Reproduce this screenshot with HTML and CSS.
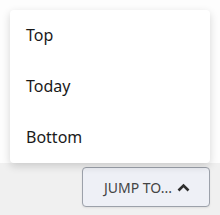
FILE: index.html
```html
<!DOCTYPE html>
<html lang="en">
<head>
    <meta charset="UTF-8">
    <title>Jump to</title>
    <link rel="stylesheet" href="styles.css">
</head>
<body>
  <div class="page">
    <ul class="jump-menu">
        <li>Top</li>
        <li>Today</li>
        <li>Bottom</li>
    </ul>
  </div>
  <div class="footer-bar">
    <button class="jump-btn">
        JUMP TO...
        <svg width="13" height="9" viewBox="0 0 13 9"><path d="M1.5 7.5 L6.5 2.5 L11.5 7.5" fill="none" stroke="#2e2e2e" stroke-width="2.6"/></svg>
    </button>
  </div>
</body>
</html>
```

FILE: styles.css
```css
body{
    margin: 0;
    width: 220px;
    height: 215px;
    font-family: "Noto Sans", "Open Sans", sans-serif;
    background-color: #fdfdfd;
    overflow: hidden;
}

.page{
    padding: 10px 10px 0 10px;
    position: relative;
    z-index: 1;
}

.jump-menu{
    list-style: none;
    margin: 0;
    padding: 0;
    background: #fff;
    border-radius: 4px;
    box-shadow: 0 3px 8px rgba(0,0,0,0.16);
}

.jump-menu li{
    height: 51px;
    line-height: 51px;
    padding-left: 16px;
    font-size: 16px;
    color: #1a1a1a;
}

.footer-bar{
    background-color: #f0f0f0;
    height: 52px;
    display: flex;
    justify-content: flex-end;
    align-items: flex-start;
    padding: 4px 10px 0 0;
    box-sizing: border-box;
}

.jump-btn{
    width: 128px;
    height: 40px;
    background-color: #eef0f6;
    border: 1px solid #9ca1aa;
    border-radius: 4px;
    font-family: "Noto Sans", "Open Sans", sans-serif;
    font-size: 14px;
    color: #444;
    display: flex;
    align-items: center;
    gap: 5px;
    padding: 0 0 0 21px;
    box-shadow: 0 1px 2px rgba(0,0,0,0.08);
}
```
